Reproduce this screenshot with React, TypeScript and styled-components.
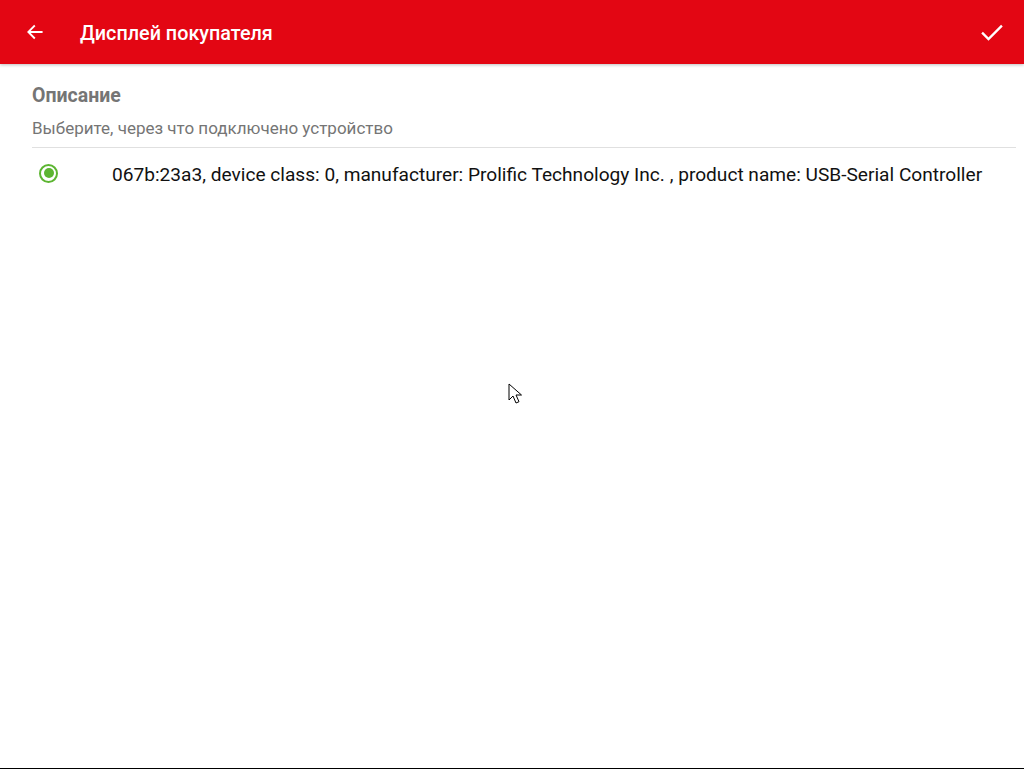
import React from "react";
import styled, { createGlobalStyle } from "styled-components";

const GlobalStyle = createGlobalStyle`
  html, body {
    margin: 0;
    padding: 0;
    background: #ffffff;
    font-family: Roboto, "Noto Sans", sans-serif;
  }
`;

const Screen = styled.div`
  position: relative;
  width: 1024px;
  height: 769px;
  display: flex;
  flex-direction: column;
  background: #ffffff;
  border-bottom: 1px solid #000000;
  box-sizing: border-box;
  overflow: hidden;
`;

const Toolbar = styled.header`
  height: 64px;
  flex-shrink: 0;
  display: flex;
  align-items: center;
  background: #e30613;
  color: #ffffff;
  box-shadow: 0 1px 3px rgba(0, 0, 0, 0.25);
  position: relative;
  z-index: 1;
`;

const IconButton = styled.button<{ $edge: "left" | "right" }>`
  width: 48px;
  height: 48px;
  display: flex;
  align-items: center;
  justify-content: center;
  background: transparent;
  border: none;
  padding: 0;
  color: #ffffff;
  margin: ${(p) => (p.$edge === "left" ? "0 0 0 11px" : "0 8px 0 0")};
`;

const Title = styled.h1`
  flex: 1;
  margin: 2px 0 0 21px;
  font-size: 19.8px;
  font-weight: 500;
`;

const Section = styled.section`
  padding: 21px 0 0 32px;
`;

const SectionTitle = styled.div`
  font-size: 19.5px;
  font-weight: 700;
  color: #757575;
  line-height: 22px;
`;

const SectionHint = styled.div`
  margin-top: 11px;
  font-size: 17px;
  color: #757575;
  line-height: 20px;
`;

const Divider = styled.hr`
  margin: 9px 8px 0 0;
  border: none;
  border-top: 1px solid #e0e0e0;
`;

const Option = styled.label`
  display: flex;
  align-items: center;
  height: 52px;
  padding-left: 39px;
  cursor: pointer;
`;

const Radio = styled.span<{ $checked: boolean }>`
  width: 19px;
  height: 19px;
  margin-top: -2px;
  border-radius: 50%;
  border: 2px solid #5cb531;
  box-sizing: border-box;
  display: flex;
  align-items: center;
  justify-content: center;
  &::after {
    content: "";
    width: 10px;
    height: 10px;
    border-radius: 50%;
    background: ${(p) => (p.$checked ? "#5cb531" : "transparent")};
  }
`;

const OptionText = styled.span`
  margin-left: 54px;
  font-size: 19.12px;
  color: #111111;
`;

const Cursor = styled.svg`
  position: absolute;
  left: 508px;
  top: 383px;
`;

const devices = [
  {
    id: "067b:23a3",
    label:
      "067b:23a3, device class: 0, manufacturer: Prolific Technology Inc. , product name: USB-Serial Controller",
  },
];

export default function App() {
  const [selected, setSelected] = React.useState(devices[0].id);

  return (
    <>
      <GlobalStyle />
      <Screen>
        <Toolbar>
          <IconButton $edge="left" aria-label="back">
            <svg width="20" height="20" viewBox="0 0 24 24" fill="none">
              <path
                d="M20 12H5M11 5l-7 7 7 7"
                stroke="#fff"
                strokeWidth="2.2"
                strokeLinecap="square"
              />
            </svg>
          </IconButton>
          <Title>Дисплей покупателя</Title>
          <IconButton $edge="right" aria-label="save">
            <svg width="28" height="28" viewBox="0 0 24 24" fill="none">
              <path
                d="M3.5 12.5l5.5 5.5L20.5 6.5"
                stroke="#fff"
                strokeWidth="2"
              />
            </svg>
          </IconButton>
        </Toolbar>
        <Section>
          <SectionTitle>Описание</SectionTitle>
          <SectionHint>Выберите, через что подключено устройство</SectionHint>
          <Divider />
        </Section>
        {devices.map((d) => (
          <Option key={d.id} onClick={() => setSelected(d.id)}>
            <Radio $checked={selected === d.id} />
            <OptionText>{d.label}</OptionText>
          </Option>
        ))}
        <Cursor width="14" height="22" viewBox="0 0 14 22">
          <path
            d="M1 1v16l4-4 3 7 3-1.3-3-6.7h5.5z"
            fill="#fff"
            stroke="#000"
            strokeWidth="1"
            strokeLinejoin="miter"
          />
        </Cursor>
      </Screen>
    </>
  );
}
